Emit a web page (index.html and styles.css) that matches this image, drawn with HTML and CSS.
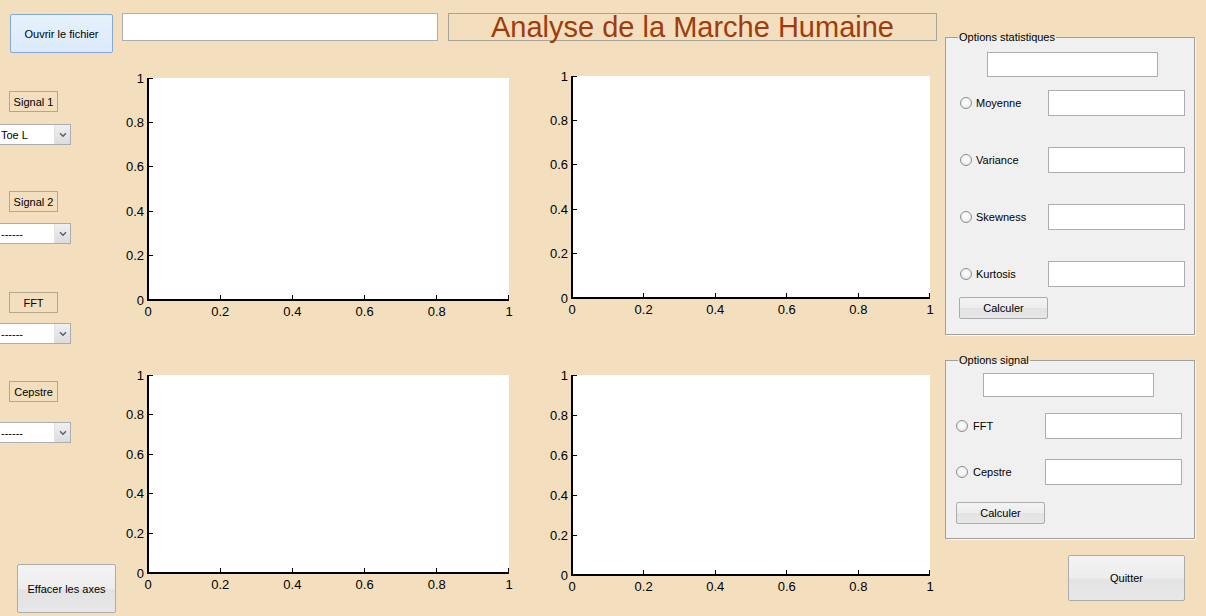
FILE: index.html
```html
<!DOCTYPE html>
<html lang="fr">
<head>
<meta charset="utf-8">
<title>Analyse de la Marche Humaine</title>
<link rel="stylesheet" href="styles.css">
</head>
<body>
<div class="app">
  <div class="main">
    <div class="topbar">
      <button class="btn btn-open">Ouvrir le fichier</button>
      <div class="edit path"></div>
      <div class="title"><span>Analyse de la Marche Humaine</span></div>
    </div>
    <div class="content">
      <div class="sidebar">
        <div class="tag">Signal 1</div>
        <div class="select"><span class="select-text">Toe L</span><span class="select-arrow"><svg width="8" height="6" viewBox="0 0 8 6"><path d="M1 1.2 L4 4.2 L7 1.2" fill="none" stroke="#4f5d78" stroke-width="1.4"/></svg></span></div>
        <div class="tag">Signal 2</div>
        <div class="select"><span class="select-text">------</span><span class="select-arrow"><svg width="8" height="6" viewBox="0 0 8 6"><path d="M1 1.2 L4 4.2 L7 1.2" fill="none" stroke="#4f5d78" stroke-width="1.4"/></svg></span></div>
        <div class="tag">FFT</div>
        <div class="select"><span class="select-text">------</span><span class="select-arrow"><svg width="8" height="6" viewBox="0 0 8 6"><path d="M1 1.2 L4 4.2 L7 1.2" fill="none" stroke="#4f5d78" stroke-width="1.4"/></svg></span></div>
        <div class="tag">Cepstre</div>
        <div class="select"><span class="select-text">------</span><span class="select-arrow"><svg width="8" height="6" viewBox="0 0 8 6"><path d="M1 1.2 L4 4.2 L7 1.2" fill="none" stroke="#4f5d78" stroke-width="1.4"/></svg></span></div>
        <button class="btn btn-clear">Effacer les axes</button>
      </div>
      <div class="plots">
        <svg class="plot" width="399" height="256" viewBox="0 0 399 256">
          <rect x="28" y="12" width="361" height="222" fill="#fff"/>
          <rect x="27" y="12" width="2" height="223" fill="#000"/>
          <rect x="27" y="233" width="362" height="2" fill="#000"/>
          <path d="M29 12.5h4M29 56.5h4M29 100.5h4M29 145.5h4M29 189.5h4M100.5 233v-4M172.5 233v-4M244.5 233v-4M316.5 233v-4M388.5 233v-4" stroke="#000" stroke-width="1"/>
          <g class="yl">
            <text x="24" y="16.5">1</text><text x="24" y="60.9">0.8</text><text x="24" y="105.3">0.6</text><text x="24" y="149.7">0.4</text><text x="24" y="194.1">0.2</text><text x="24" y="238.5">0</text>
          </g>
          <g class="xl">
            <text x="28" y="250">0</text><text x="100.2" y="250">0.2</text><text x="172.4" y="250">0.4</text><text x="244.6" y="250">0.6</text><text x="316.8" y="250">0.8</text><text x="389" y="250">1</text>
          </g>
        </svg>
        <svg class="plot" width="396" height="256" viewBox="0 0 396 256">
          <rect x="28" y="10" width="358" height="222" fill="#fff"/>
          <rect x="27" y="10" width="2" height="223" fill="#000"/>
          <rect x="27" y="231" width="359" height="2" fill="#000"/>
          <path d="M29 10.5h4M29 54.5h4M29 98.5h4M29 143.5h4M29 187.5h4M99.5 231v-4M171.5 231v-4M242.5 231v-4M314.5 231v-4M385.5 231v-4" stroke="#000" stroke-width="1"/>
          <g class="yl">
            <text x="24" y="14.5">1</text><text x="24" y="58.9">0.8</text><text x="24" y="103.3">0.6</text><text x="24" y="147.7">0.4</text><text x="24" y="192.1">0.2</text><text x="24" y="236.5">0</text>
          </g>
          <g class="xl">
            <text x="28" y="248">0</text><text x="99.6" y="248">0.2</text><text x="171.2" y="248">0.4</text><text x="242.8" y="248">0.6</text><text x="314.4" y="248">0.8</text><text x="386" y="248">1</text>
          </g>
        </svg>
        <svg class="plot" width="399" height="234" viewBox="0 0 399 234">
          <rect x="28" y="11" width="361" height="198" fill="#fff"/>
          <rect x="27" y="11" width="2" height="199" fill="#000"/>
          <rect x="27" y="208" width="362" height="2" fill="#000"/>
          <path d="M29 11.5h4M29 50.5h4M29 90.5h4M29 129.5h4M29 169.5h4M100.5 208v-4M172.5 208v-4M244.5 208v-4M316.5 208v-4M388.5 208v-4" stroke="#000" stroke-width="1"/>
          <g class="yl">
            <text x="24" y="15.5">1</text><text x="24" y="55.1">0.8</text><text x="24" y="94.7">0.6</text><text x="24" y="134.3">0.4</text><text x="24" y="173.9">0.2</text><text x="24" y="213.5">0</text>
          </g>
          <g class="xl">
            <text x="28" y="225">0</text><text x="100.2" y="225">0.2</text><text x="172.4" y="225">0.4</text><text x="244.6" y="225">0.6</text><text x="316.8" y="225">0.8</text><text x="389" y="225">1</text>
          </g>
        </svg>
        <svg class="plot" width="396" height="234" viewBox="0 0 396 234">
          <rect x="28" y="11" width="358" height="200" fill="#fff"/>
          <rect x="27" y="11" width="2" height="201" fill="#000"/>
          <rect x="27" y="210" width="359" height="2" fill="#000"/>
          <path d="M29 11.5h4M29 51.5h4M29 91.5h4M29 131.5h4M29 171.5h4M99.5 210v-4M171.5 210v-4M242.5 210v-4M314.5 210v-4M385.5 210v-4" stroke="#000" stroke-width="1"/>
          <g class="yl">
            <text x="24" y="15.5">1</text><text x="24" y="55.5">0.8</text><text x="24" y="95.5">0.6</text><text x="24" y="135.5">0.4</text><text x="24" y="175.5">0.2</text><text x="24" y="215.5">0</text>
          </g>
          <g class="xl">
            <text x="28" y="227">0</text><text x="99.6" y="227">0.2</text><text x="171.2" y="227">0.4</text><text x="242.8" y="227">0.6</text><text x="314.4" y="227">0.8</text><text x="386" y="227">1</text>
          </g>
        </svg>
      </div>
    </div>
  </div>
  <div class="side">
    <div class="panel panel-stats">
      <div class="panel-title">Options statistiques</div>
      <div class="edit panel-edit"></div>
      <div class="opt"><span class="radio"></span><span class="opt-label">Moyenne</span><div class="edit opt-edit"></div></div>
      <div class="opt"><span class="radio"></span><span class="opt-label">Variance</span><div class="edit opt-edit"></div></div>
      <div class="opt"><span class="radio"></span><span class="opt-label">Skewness</span><div class="edit opt-edit"></div></div>
      <div class="opt"><span class="radio"></span><span class="opt-label">Kurtosis</span><div class="edit opt-edit"></div></div>
      <button class="btn btn-calc">Calculer</button>
    </div>
    <div class="panel panel-signal">
      <div class="panel-title">Options signal</div>
      <div class="edit panel-edit"></div>
      <div class="opt"><span class="radio"></span><span class="opt-label">FFT</span><div class="edit opt-edit"></div></div>
      <div class="opt"><span class="radio"></span><span class="opt-label">Cepstre</span><div class="edit opt-edit"></div></div>
      <button class="btn btn-calc">Calculer</button>
    </div>
    <button class="btn btn-quit">Quitter</button>
  </div>
</div>
</body>
</html>
```
FILE: styles.css
```css
* { box-sizing: border-box; }

html, body {
  margin: 0;
  padding: 0;
}

body {
  width: 1206px;
  height: 616px;
  overflow: hidden;
  background: #f3dfbd;
  font-family: "Liberation Sans", Arial, sans-serif;
  font-size: 11px;
  color: #000;
}

.app {
  display: flex;
  height: 616px;
}

.main {
  width: 945px;
  display: flex;
  flex-direction: column;
}

/* ---------- top bar ---------- */
.topbar {
  height: 52px;
  display: flex;
  align-items: flex-start;
  padding: 13px 0 0 10px;
}

.btn {
  font-family: "Liberation Sans", Arial, sans-serif;
  font-size: 11px;
  color: #000;
  padding: 0;
  border: 1px solid #acacac;
  border-radius: 2px;
  background: linear-gradient(to bottom, #f3f3f3 0%, #ededed 50%, #e3e3e3 52%, #e7e7e7 100%);
  display: flex;
  align-items: center;
  justify-content: center;
}

.btn-open {
  width: 103px;
  height: 39px;
  margin-top: 1px;
  border-color: #7faad8;
  background: linear-gradient(to bottom, #e6f1fc 0%, #dbeafa 100%);
}

.edit {
  background: #fff;
  border: 1px solid #abadb3;
}

.path {
  width: 316px;
  height: 28px;
  margin-left: 9px;
}

.title {
  width: 489px;
  height: 28px;
  margin-left: 10px;
  border: 1px solid #a9a49a;
  text-align: center;
  font-size: 29px;
  line-height: 26px;
  color: #a03c0c;
  white-space: nowrap;
}

/* ---------- content ---------- */
.content {
  display: flex;
  flex: 1;
}

.sidebar {
  width: 120px;
  display: flex;
  flex-direction: column;
  align-items: flex-start;
}

.tag {
  width: 49px;
  height: 21px;
  margin-left: 9px;
  border: 1px solid #b3a78f;
  display: flex;
  align-items: center;
  justify-content: center;
  white-space: nowrap;
}

.select {
  width: 71px;
  height: 21px;
  background: #fff;
  border: 1px solid #abadb3;
  border-left: none;
  display: flex;
  align-items: stretch;
}

.select-text {
  flex: 1;
  padding-left: 1px;
  display: flex;
  align-items: center;
}

.select-arrow {
  width: 16px;
  background: linear-gradient(to bottom, #f0f0f0, #dcdcdc);
  border-left: 1px solid #e2e2e2;
  display: flex;
  align-items: center;
  justify-content: center;
}

.sidebar > :nth-child(1) { margin-top: 39px; }
.sidebar > :nth-child(2) { margin-top: 12px; }
.sidebar > :nth-child(3) { margin-top: 46px; }
.sidebar > :nth-child(4) { margin-top: 11px; }
.sidebar > :nth-child(5) { margin-top: 48px; }
.sidebar > :nth-child(6) { margin-top: 10px; }
.sidebar > :nth-child(7) { margin-top: 37px; }
.sidebar > :nth-child(8) { margin-top: 20px; }

.btn-clear {
  width: 99px;
  height: 49px;
  margin: 121px 0 0 17px;
}

.plots {
  display: grid;
  grid-template-columns: 399px 396px;
  grid-template-rows: 256px 234px;
  column-gap: 25px;
  row-gap: 42px;
  padding-top: 14px;
  align-content: start;
}

.plot {
  display: block;
  overflow: visible;
}

.plot text {
  font-family: "Liberation Sans", Arial, sans-serif;
  font-size: 13px;
  fill: #000;
}

.yl text { text-anchor: end; }
.xl text { text-anchor: middle; }

/* ---------- right side ---------- */
.side {
  width: 261px;
  display: flex;
  flex-direction: column;
  align-items: flex-start;
  padding-top: 37px;
}

.panel {
  width: 250px;
  background: #f0f0f0;
  border: 1px solid #a0a0a0;
  box-shadow: 1px 1px 0 #fbf5ea;
  display: flex;
  flex-direction: column;
  align-items: flex-start;
}

.panel-title {
  margin: -7px 0 0 12px;
  padding: 0 1px;
  line-height: 13px;
  background: linear-gradient(to bottom, #f3dfbd 0, #f3dfbd 7px, #f0f0f0 7px);
  white-space: nowrap;
}

.panel-edit {
  width: 171px;
}

.opt {
  width: 100%;
  height: 26px;
  display: flex;
  align-items: center;
}

.radio {
  width: 12px;
  height: 12px;
  border-radius: 50%;
  border: 1px solid #8d8d8d;
  background: radial-gradient(circle at 50% 40%, #ffffff 0%, #f4f4f4 50%, #dcdcdc 100%);
  flex: none;
}

.opt-label {
  margin-left: 4px;
}

.opt-edit {
  width: 137px;
  height: 26px;
  margin-left: auto;
}

.btn-calc {
  width: 89px;
  height: 22px;
}

/* statistics panel */
.panel-stats {
  padding-bottom: 15px;
}
.panel-stats .panel-edit {
  height: 25px;
  margin: 8px 0 0 41px;
}
.panel-stats .opt {
  padding: 0 9px 0 14px;
  margin-top: 31px;
}
.panel-stats .panel-edit + .opt {
  margin-top: 13px;
}
.panel-stats .btn-calc {
  margin: 10px 0 0 13px;
}

/* signal panel */
.panel-signal {
  margin-top: 25px;
  padding-bottom: 14px;
}
.panel-signal .panel-edit {
  height: 24px;
  margin: 6px 0 0 37px;
}
.panel-signal .opt {
  padding: 0 12px 0 10px;
  margin-top: 20px;
}
.panel-signal .panel-edit + .opt {
  margin-top: 16px;
}
.panel-signal .opt-label {
  margin-left: 5px;
}
.panel-signal .btn-calc {
  margin: 17px 0 0 10px;
}

.btn-quit {
  width: 117px;
  height: 46px;
  margin: 16px 0 0 123px;
}
```
